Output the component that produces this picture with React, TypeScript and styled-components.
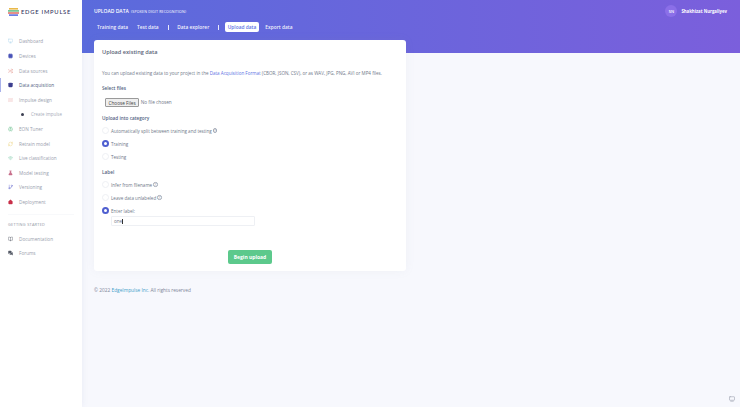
import type { FC, ReactNode } from 'react'
import styled, { createGlobalStyle } from 'styled-components'
import {
  BookOpen,
  Brain,
  Cpu,
  Database,
  FlaskConical,
  GitBranch,
  Home,
  MessagesSquare,
  Monitor,
  RefreshCw,
  Shuffle,
  Tv2,
  Waves,
  Wifi,
} from 'lucide-react'

const GlobalStyle = createGlobalStyle`
  html, body {
    margin: 0;
    padding: 0;
    background: #f7f8fd;
    font-family: "Open Sans", "Liberation Sans", sans-serif;
  }
  * { box-sizing: border-box; }
`

const Page = styled.div`
  display: flex;
  width: 740px;
  height: 407px;
  overflow: hidden;
  position: relative;
`

const Sidebar = styled.aside`
  flex: 0 0 82px;
  background: #ffffff;
  box-shadow: 0 0 6px rgba(120, 130, 180, 0.12);
  display: flex;
  flex-direction: column;
`

const Logo = styled.div`
  display: flex;
  align-items: center;
  gap: 2px;
  height: 25px;
  margin-bottom: 9px;
  padding: 0 0 2px 8px;
  font-size: 5.8px;
  letter-spacing: 0.75px;
  color: #32325d;
  font-family: "Lato", sans-serif;
  font-weight: 500;
  white-space: nowrap;
`

const NavItem = styled.div<{ $active?: boolean }>`
  display: flex;
  align-items: center;
  height: 14.62px;
  padding-left: 7px;
  gap: 6px;
  font-size: 4.7px;
  color: ${(p) => (p.$active ? '#525f7f' : '#9aa0ae')};
  border-left: ${(p) => (p.$active ? '1px solid #a9b2ea' : '1px solid transparent')};
  white-space: nowrap;
`

const NavIcon = styled.span<{ $color: string; $solid?: boolean }>`
  display: flex;
  justify-content: center;
  width: 5px;
  color: ${(p) => p.$color};
  svg {
    fill: ${(p) => (p.$solid ? p.$color : 'none')};
  }
`

const SubItem = styled.div`
  display: flex;
  align-items: center;
  height: 14.62px;
  padding-left: 21px;
  gap: 7px;
  font-size: 4.4px;
  color: #a6abb8;
  white-space: nowrap;
`

const Dot = styled.span`
  width: 3px;
  height: 3px;
  border-radius: 50%;
  background: #3c3f52;
`

const NavDivider = styled.div`
  margin: 5px 8px 0 8px;
  border-top: 1px solid #f8f9fb;
`

const NavHeading = styled.div`
  font-size: 3.9px;
  letter-spacing: 0.25px;
  color: #8f95a3;
  padding: 6px 0 4px 8px;
  height: 16px;
  display: flex;
  align-items: center;
`

const Main = styled.main`
  flex: 1;
  min-width: 0;
  display: flex;
  flex-direction: column;
`

const Header = styled.header`
  height: 53px;
  flex: 0 0 53px;
  background: linear-gradient(87deg, #5a6bdc 0, #7b5fdc 100%);
  padding: 7px 13px 0 12px;
  display: flex;
  justify-content: space-between;
  align-items: flex-start;
`

const HeaderLeft = styled.div`
  display: flex;
  flex-direction: column;
`

const Title = styled.div`
  font-size: 5px;
  font-weight: 600;
  color: #ffffff;
  height: 9px;
  line-height: 9px;
  white-space: nowrap;
  span {
    font-size: 3.6px;
    font-weight: 400;
    letter-spacing: 0.15px;
    margin-left: 1px;
  }
`

const Tabs = styled.nav`
  display: flex;
  align-items: center;
  margin-top: 5.5px;
  height: 11px;
`

const Tab = styled.div<{ $active?: boolean; $gap?: number }>`
  font-size: 4.85px;
  font-weight: 600;
  height: 10px;
  line-height: 10px;
  padding: 0 3px;
  margin-left: ${(p) => p.$gap ?? 0}px;
  border-radius: 2px;
  white-space: nowrap;
  color: ${(p) => (p.$active ? '#5e72e4' : 'rgba(255, 255, 255, 0.92)')};
  background: ${(p) => (p.$active ? '#ffffff' : 'transparent')};
`

const TabSep = styled.div`
  width: 1px;
  height: 5px;
  background: rgba(255, 255, 255, 0.85);
  margin: 0 5.5px 0 6px;
`

const User = styled.div`
  display: flex;
  align-items: center;
  gap: 4px;
  font-size: 4.3px;
  font-weight: 700;
  color: #ffffff;
  margin-top: -2px;
`

const Avatar = styled.div`
  width: 12px;
  height: 12px;
  border-radius: 50%;
  background: #8b6fe8;
  font-size: 4px;
  display: flex;
  align-items: center;
  justify-content: center;
  font-weight: 600;
`

const Content = styled.div`
  padding: 0 12px;
  margin-top: -13px;
`

const Card = styled.section`
  width: 312px;
  height: 231px;
  background: #ffffff;
  border-radius: 3px;
  box-shadow: 0 0 10px rgba(136, 152, 170, 0.08);
  display: flex;
  flex-direction: column;
`

const CardTitle = styled.h2`
  margin: 0;
  height: 23px;
  padding: 0 8px;
  display: flex;
  align-items: center;
  font-size: 5.6px;
  font-weight: 600;
  color: #5b6478;
`

const CardBody = styled.div`
  padding: 7px 8px 0;
  display: flex;
  flex-direction: column;
  font-size: 4.55px;
  color: #6f7889;
`

const Intro = styled.p`
  margin: 0;
  height: 7px;
  line-height: 7px;
  white-space: nowrap;
  a {
    color: #5e72e4;
    text-decoration: none;
  }
`

const Label = styled.div<{ $top: number }>`
  font-size: 4.7px;
  font-weight: 600;
  color: #525f7f;
  height: 7px;
  line-height: 7px;
  margin-top: ${(p) => p.$top}px;
`

const FileRow = styled.div`
  display: flex;
  align-items: center;
  gap: 1.5px;
  margin: 5.5px 0 0 3px;
  font-size: 4.7px;
  color: #6f7889;
`

const FileButton = styled.div`
  height: 9.5px;
  line-height: 8.5px;
  padding: 0 2.5px;
  background: #efefef;
  border: 0.5px solid #9a9a9a;
  border-radius: 1px;
  color: #444;
  font-size: 4.7px;
  white-space: nowrap;
`

const RadioGroup = styled.div`
  display: flex;
  flex-direction: column;
  gap: 6px;
  margin-top: 5px;
`

const RadioRow = styled.div`
  display: flex;
  align-items: center;
  gap: 2px;
  height: 7px;
  white-space: nowrap;
`

const Radio = styled.span<{ $on?: boolean }>`
  width: 7px;
  height: 7px;
  border-radius: 50%;
  flex: 0 0 7px;
  background: #ffffff;
  border: ${(p) => (p.$on ? '2px solid #4f5fd0' : '0.5px solid #eef0f4')};
`

const Help = styled.span`
  display: inline-flex;
  align-items: center;
  justify-content: center;
  width: 4.5px;
  height: 4.5px;
  border: 0.3px solid #a3a9b6;
  border-radius: 50%;
  font-size: 3.2px;
  margin-left: -1px;
`

const LabelInput = styled.div`
  margin: 2px 0 0 9px;
  width: 144px;
  height: 10px;
  border: 0.5px solid #eef0f4;
  border-radius: 1px;
  font-size: 4.6px;
  line-height: 9px;
  padding-left: 2px;
  color: #6f7889;
`

const Caret = styled.span`
  display: inline-block;
  width: 0.5px;
  height: 5px;
  background: #333;
  vertical-align: -0.8px;
`

const Submit = styled.div`
  align-self: center;
  margin-top: 24px;
  width: 44px;
  height: 14px;
  line-height: 14px;
  text-align: center;
  background: #5cc98c;
  color: #ffffff;
  font-size: 5px;
  font-weight: 700;
  border-radius: 2px;
`

const Footer = styled.footer`
  margin-top: 16px;
  font-size: 4.8px;
  color: #7d8597;
  height: 7px;
  line-height: 7px;
  a {
    color: #3f9ec9;
  }
`

const ChatButton = styled.div`
  position: absolute;
  right: 5px;
  bottom: 5px;
  color: #8d93a0;
  display: flex;
`

const Ic = (Icon: FC<{ size?: number; strokeWidth?: number }>) => <Icon size={6} strokeWidth={2} />

type Item = { label: string; color: string; icon: ReactNode; active?: boolean; solid?: boolean }

const items: Item[] = [
  { label: 'Dashboard', color: '#a9d3ec', icon: Ic(Monitor) },
  { label: 'Devices', color: '#4c55b8', icon: Ic(Cpu), solid: true },
  { label: 'Data sources', color: '#e0897f', icon: Ic(Shuffle) },
  { label: 'Data acquisition', color: '#3d3f8f', icon: Ic(Database), active: true, solid: true },
  { label: 'Impulse design', color: '#e6a7a7', icon: Ic(Waves) },
]

const items2: Item[] = [
  { label: 'EON Tuner', color: '#79c79a', icon: Ic(Brain) },
  { label: 'Retrain model', color: '#ecd27a', icon: Ic(RefreshCw) },
  { label: 'Live classification', color: '#6fc3a0', icon: Ic(Wifi) },
  { label: 'Model testing', color: '#c9708c', icon: Ic(FlaskConical), solid: true },
  { label: 'Versioning', color: '#6a6fd0', icon: Ic(GitBranch) },
  { label: 'Deployment', color: '#c9304a', icon: Ic(Home), solid: true },
]

const items3: Item[] = [
  { label: 'Documentation', color: '#555b66', icon: Ic(BookOpen) },
  { label: 'Forums', color: '#555b66', icon: Ic(MessagesSquare), solid: true },
]

const LogoMark: FC = () => (
  <svg width="11" height="8" viewBox="0 0 11 8">
    <rect x="1" y="0" width="9" height="1.6" fill="#e9b949" />
    <rect x="0" y="2.1" width="11" height="1.6" fill="#6cc08b" />
    <rect x="0" y="4.2" width="11" height="1.6" fill="#e2766b" />
    <rect x="1" y="6.3" width="9" height="1.6" fill="#5e72e4" />
  </svg>
)

const App: FC = () => {
  const nav = (list: Item[]) =>
    list.map((item) => (
      <NavItem key={item.label} $active={item.active}>
        <NavIcon $color={item.color} $solid={item.solid}>
          {item.icon}
        </NavIcon>
        {item.label}
      </NavItem>
    ))

  return (
    <Page>
      <GlobalStyle />
      <Sidebar>
        <Logo>
          <LogoMark />
          EDGE IMPULSE
        </Logo>
        {nav(items)}
        <SubItem>
          <Dot />
          Create impulse
        </SubItem>
        {nav(items2)}
        <NavDivider />
        <NavHeading>GETTING STARTED</NavHeading>
        {nav(items3)}
      </Sidebar>
      <Main>
        <Header>
          <HeaderLeft>
            <Title>
              UPLOAD DATA <span>(SPOKEN DIGIT RECOGNITION)</span>
            </Title>
            <Tabs>
              <Tab>Training data</Tab>
              <Tab $gap={3}>Test data</Tab>
              <TabSep />
              <Tab>Data explorer</Tab>
              <TabSep />
              <Tab $active>Upload data</Tab>
              <Tab $gap={3}>Export data</Tab>
            </Tabs>
          </HeaderLeft>
          <User>
            <Avatar>SN</Avatar>
            Shakhizat Nurgaliyev
          </User>
        </Header>
        <Content>
          <Card>
            <CardTitle>Upload existing data</CardTitle>
            <CardBody>
              <Intro>
                You can upload existing data to your project in the <a>Data Acquisition Format</a> (CBOR, JSON, CSV),
                or as WAV, JPG, PNG, AVI or MP4 files.
              </Intro>
              <Label $top={8}>Select files</Label>
              <FileRow>
                <FileButton>Choose Files</FileButton>
                No file chosen
              </FileRow>
              <Label $top={8}>Upload into category</Label>
              <RadioGroup>
                <RadioRow>
                  <Radio />
                  Automatically split between training and testing<Help>?</Help>
                </RadioRow>
                <RadioRow>
                  <Radio $on />
                  Training
                </RadioRow>
                <RadioRow>
                  <Radio />
                  Testing
                </RadioRow>
              </RadioGroup>
              <Label $top={9}>Label</Label>
              <RadioGroup>
                <RadioRow>
                  <Radio />
                  Infer from filename<Help>?</Help>
                </RadioRow>
                <RadioRow>
                  <Radio />
                  Leave data unlabeled<Help>?</Help>
                </RadioRow>
                <RadioRow>
                  <Radio $on />
                  Enter label:
                </RadioRow>
              </RadioGroup>
              <LabelInput>
                one
                <Caret />
              </LabelInput>
              <Submit>Begin upload</Submit>
            </CardBody>
          </Card>
          <Footer>
            © 2022 <a>EdgeImpulse Inc.</a> All rights reserved
          </Footer>
        </Content>
      </Main>
      <ChatButton>
        <Tv2 size={6} />
      </ChatButton>
    </Page>
  )
}

export default App
